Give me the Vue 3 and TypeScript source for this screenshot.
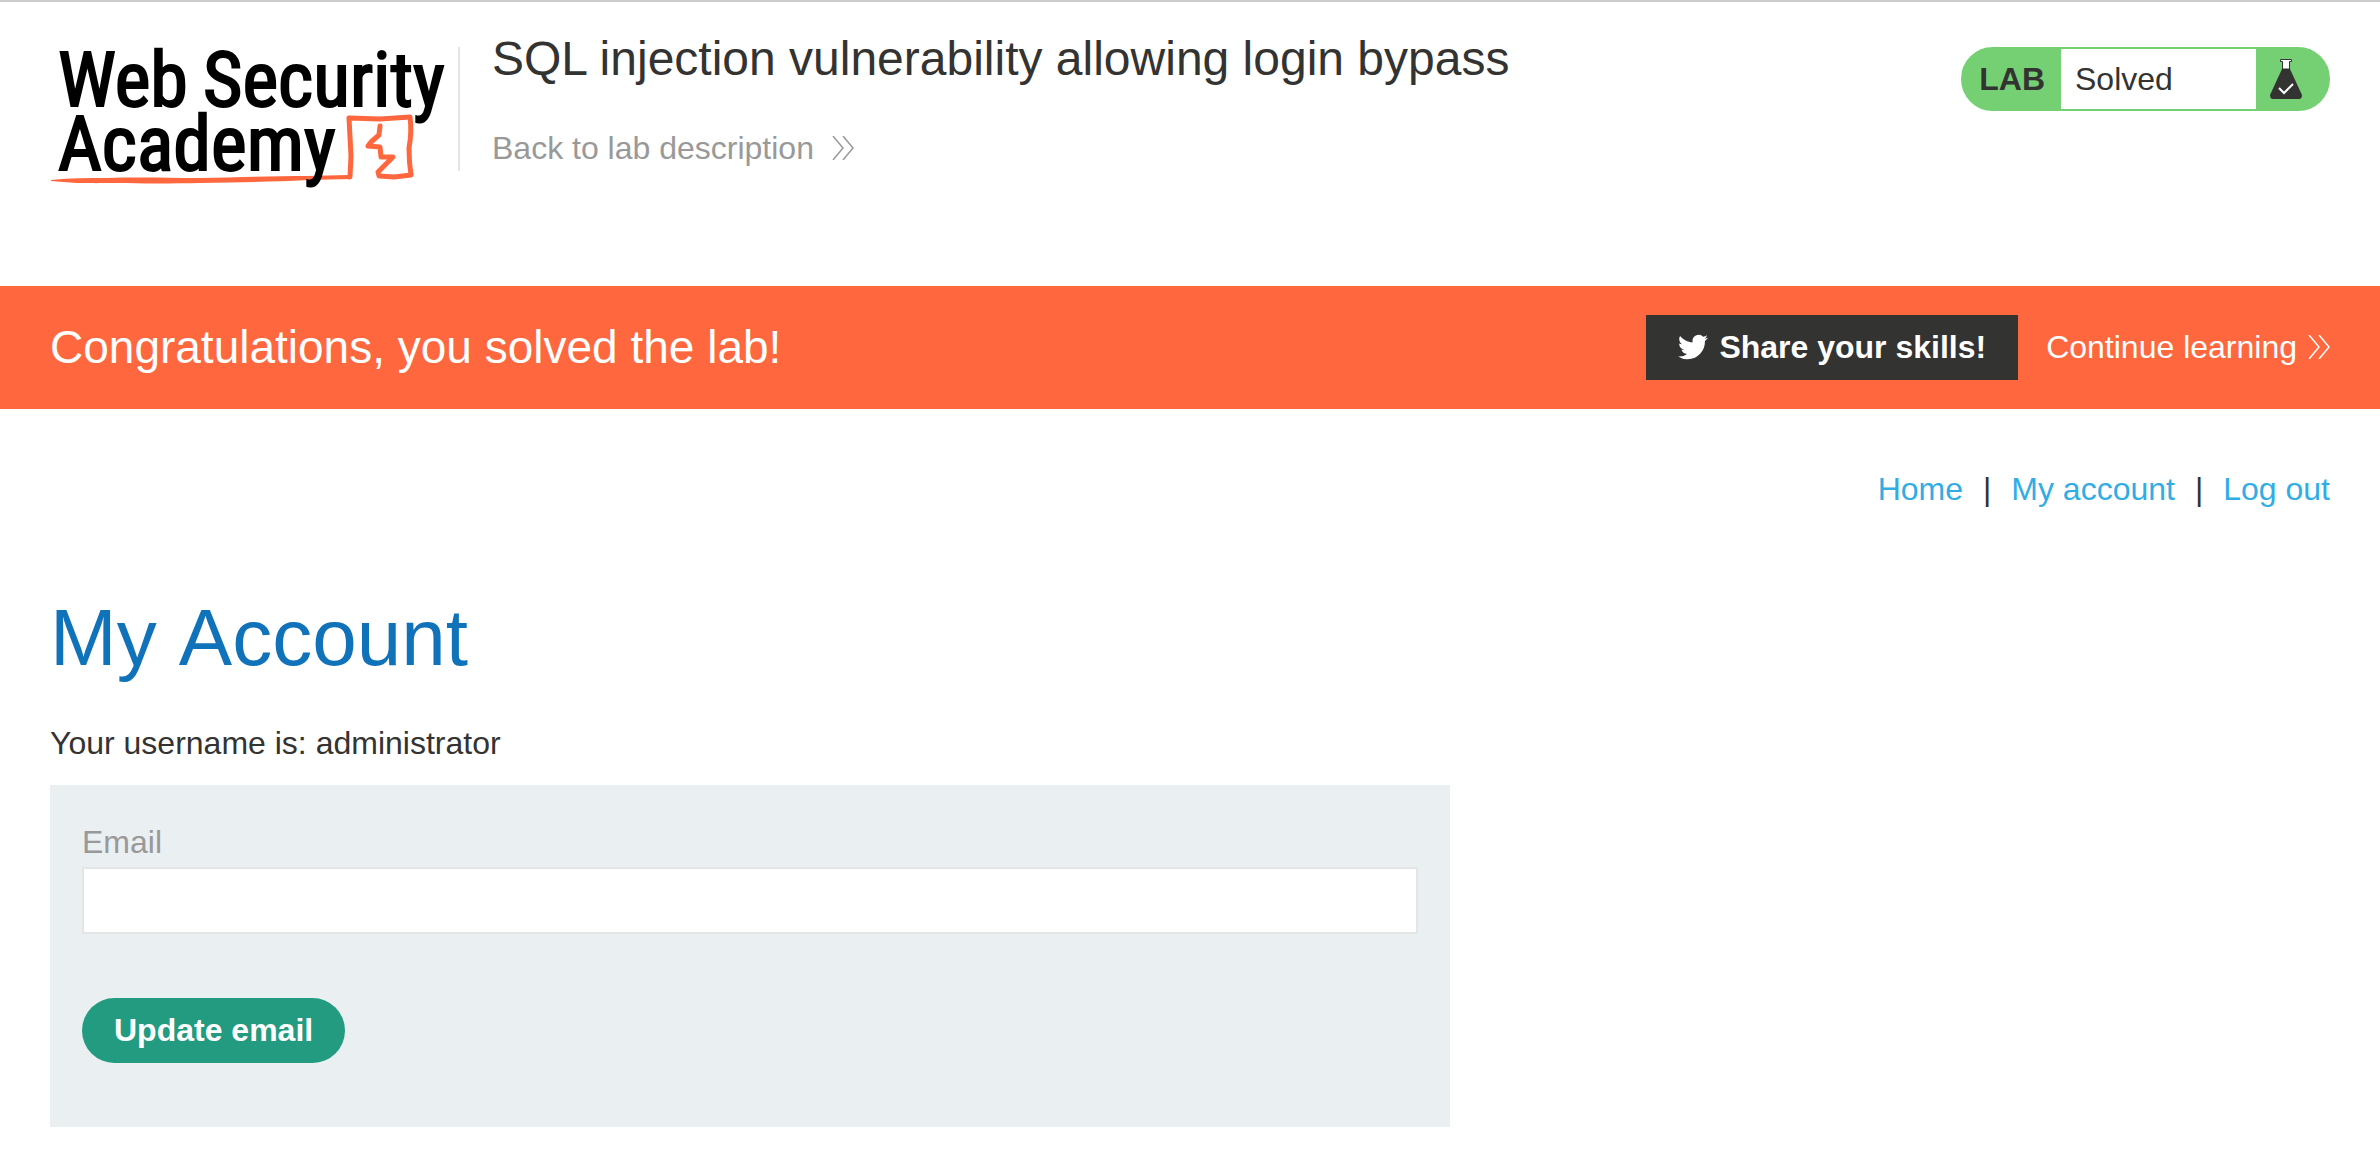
<script setup lang="ts">
import { ref } from 'vue'

interface NavLink {
  label: string
  href: string
}

const navLinks: NavLink[] = [
  { label: 'Home', href: '#home' },
  { label: 'My account', href: '#my-account' },
  { label: 'Log out', href: '#logout' },
]

const username = 'administrator'
const email = ref('')
</script>

<template>
  <div class="page">
    <header class="lab-header">
      <a class="logo" href="#academy" aria-label="Web Security Academy">
        <svg width="400" height="170" viewBox="0 -20 400 170">
          <path
            class="logo-fill"
            d="M1 140 C20 138 38 138 57 138 C90 137 120 138 150 138 C190 137 225 136 257 136 L298 135 L302 139 L257 140 C225 142 190 142 150 143 C110 144 60 143 27 143 Q12 142 1 141 Z"
          />
          <path
            class="logo-line"
            d="M300 137 L301 116 L299 78 L330 79 L360 77 Q362 92 359 108 Q359 122 361 135 L344 137 L329 136 L328 132 L343 117 L331 117 L330 107 L318 106 L321 102 L329 95 L330 86"
          />
          <text class="logo-text">
            <tspan x="8" y="66">Web</tspan>
            <tspan x="153" y="66">Security</tspan>
            <tspan x="8" y="130">Academy</tspan>
          </text>
        </svg>
      </a>
      <div class="title-block">
        <h2 class="lab-title">SQL injection vulnerability allowing login bypass</h2>
        <a class="back-link" href="#lab">
          Back to lab description
          <svg class="chevrons" width="22" height="24" viewBox="0 0 22 24" aria-hidden="true">
            <path d="M1 0 L11 12 L1 24 M11 0 L21 12 L11 24" />
          </svg>
        </a>
      </div>
      <div class="lab-status">
        <span class="lab-tag">LAB</span>
        <span class="lab-state">Solved</span>
        <span class="lab-flask">
          <svg width="32" height="40" viewBox="0 0 32 40" aria-hidden="true">
            <path class="flask-body" d="M12 10 H20 L32 36 Q32 40 29 40 H3 Q0 40 0 36 Z" />
            <path class="flask-neck" d="M10.5 0.5 H21.5 V2.5 H19.5 V10 H12.5 V2.5 H10.5 Z" />
            <path class="flask-tick" d="M9 29 L14 34 L23 25" />
          </svg>
        </span>
      </div>
    </header>

    <section class="banner">
      <h4 class="banner-text">Congratulations, you solved the lab!</h4>
      <button class="share" type="button">
        <svg width="30" height="26" viewBox="0 2 24 20" aria-hidden="true">
          <path
            d="M23.95 4.57a10 10 0 0 1-2.82.77 4.96 4.96 0 0 0 2.16-2.72c-.95.55-2 .96-3.13 1.18a4.92 4.92 0 0 0-8.38 4.48C7.69 8.1 4.07 6.13 1.64 3.16a4.82 4.82 0 0 0-.66 2.48c0 1.71.87 3.21 2.19 4.1a4.9 4.9 0 0 1-2.23-.62v.06a4.92 4.92 0 0 0 3.95 4.83 5 5 0 0 1-2.21.08 4.94 4.94 0 0 0 4.6 3.42A9.87 9.87 0 0 1 0 19.54a13.99 13.99 0 0 0 7.56 2.21c9.05 0 14-7.5 14-13.98 0-.21 0-.42-.02-.63a9.94 9.94 0 0 0 2.46-2.55z"
          />
        </svg>
        <span>Share your skills!</span>
      </button>
      <a class="continue" href="#next">
        Continue learning
        <svg class="chevrons" width="22" height="24" viewBox="0 0 22 24" aria-hidden="true">
          <path d="M1 0 L11 12 L1 24 M11 0 L21 12 L11 24" />
        </svg>
      </a>
    </section>

    <main class="content">
      <nav class="top-links">
        <template v-for="(link, index) in navLinks" :key="link.href">
          <span v-if="index > 0">|</span>
          <a :href="link.href">{{ link.label }}</a>
        </template>
      </nav>

      <h1 class="heading">My Account</h1>
      <p class="username">Your username is: {{ username }}</p>

      <form class="email-form" @submit.prevent>
        <label for="email">Email</label>
        <input id="email" v-model="email" type="email" name="email" />
        <button type="submit">Update email</button>
      </form>
    </main>
  </div>
</template>

<style>
body {
  margin: 0;
  background: #fff;
}
</style>

<style scoped>
.page {
  border-top: 2px solid #ccc;
  color: #333332;
  font-family: 'Liberation Sans', Arial, Helvetica, sans-serif;
  font-size: 32px;
  line-height: 40px;
}

.page * {
  box-sizing: border-box;
}

h1,
h2,
h4,
p {
  margin: 0;
  font-weight: 400;
}

a {
  text-decoration: none;
}

svg {
  display: block;
  flex: none;
}

button,
input {
  border: 0;
  font: inherit;
}

.lab-header {
  display: flex;
  align-items: flex-start;
  padding: 18px 50px 96px;
}

.logo {
  flex: none;
}

.logo-fill {
  fill: #ff683e;
}

.logo-line {
  fill: none;
  stroke: #ff683e;
  stroke-width: 5;
  stroke-linejoin: round;
  stroke-linecap: round;
}

.logo-text {
  fill: #000;
  stroke: #000;
  stroke-width: 2;
  font-family: 'Roboto Condensed', 'Liberation Sans Narrow', 'Liberation Sans', sans-serif;
  font-size: 76px;
}

.title-block {
  position: relative;
  flex: 1;
  padding: 11px 0 0 42px;
}

.title-block::before {
  content: '';
  position: absolute;
  top: 27px;
  left: 8px;
  width: 2px;
  height: 124px;
  background: #e4e4e4;
}

.lab-title {
  margin-bottom: 41px;
  font-size: 48px;
  line-height: 56px;
}

.back-link,
.continue {
  display: inline-flex;
  align-items: center;
}

.back-link {
  gap: 18px;
  color: #999;
}

.chevrons {
  fill: none;
  stroke: currentColor;
  stroke-width: 1.5;
}

.lab-status {
  display: flex;
  flex: none;
  margin-top: 27px;
  border: 2px solid #75d074;
  border-radius: 32px;
  background: #75d074;
  line-height: 60px;
}

.lab-tag {
  padding: 0 16px;
  font-weight: 700;
}

.lab-state {
  width: 195px;
  padding-left: 14px;
  background: #fff;
}

.lab-flask {
  display: flex;
  align-items: center;
  padding: 0 26px 0 14px;
}

.flask-neck {
  fill: #fff;
  stroke: #333332;
}

.flask-body {
  fill: #333332;
}

.flask-tick {
  fill: none;
  stroke: #fff;
  stroke-width: 2;
}

.banner {
  display: flex;
  align-items: center;
  padding: 29px 50px;
  background: #ff683e;
  color: #fff;
}

.banner-text {
  flex: 1;
  padding-bottom: 2px;
  font-size: 46px;
  line-height: 56px;
}

.share {
  display: flex;
  align-items: center;
  gap: 11px;
  height: 65px;
  margin-right: 28px;
  padding: 0 32px 2px;
  background: #333332;
  color: #fff;
  font-weight: 700;
}

.share svg {
  fill: currentColor;
}

.continue {
  gap: 11px;
  padding-bottom: 2px;
  color: #fff;
}

.content {
  padding: 60px 50px 44px;
}

.top-links {
  display: flex;
  justify-content: flex-end;
  gap: 20px;
}

.top-links a {
  color: #32ade4;
}

.heading {
  margin-top: 83px;
  color: #1073ba;
  font-size: 80px;
  font-kerning: none;
  line-height: 92px;
}

.username {
  margin: 39px 0 22px;
}

.email-form {
  display: flex;
  flex-direction: column;
  align-items: flex-start;
  max-width: 1400px;
  padding: 37px 32px 64px;
  background: #eaeff2;
}

.email-form label {
  color: #999;
}

.email-form input {
  width: 100%;
  height: 67px;
  margin: 5px 0 64px;
  padding: 0 16px;
  border: 2px solid #e4e6e6;
  background: #fff;
}

.email-form button {
  height: 65px;
  padding: 0 32px 2px;
  border-radius: 33px;
  background: #229b80;
  color: #fff;
  font-weight: 700;
}
</style>
